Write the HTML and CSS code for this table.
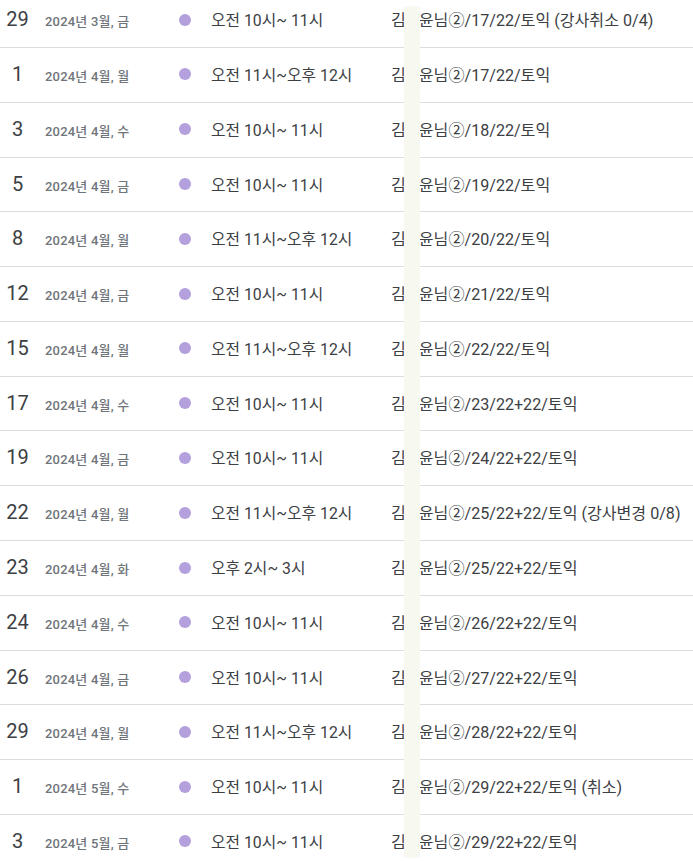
FILE: index.html
```html
<!DOCTYPE html>
<html lang="ko">
<head>
<meta charset="utf-8">
<link rel="stylesheet" href="styles.css">
</head>
<body>
<div class="agenda">
  <div class="row"><div class="day">29</div><div class="date">2024년 3월, 금</div><div class="dotcell"><span class="dot"></span></div><div class="time">오전 10시~ 11시</div><div class="title">김<span class="gap"></span>윤님②/17/22/토익 (강사취소 0/4)</div></div>
  <div class="row"><div class="day">1</div><div class="date">2024년 4월, 월</div><div class="dotcell"><span class="dot"></span></div><div class="time">오전 11시~오후 12시</div><div class="title">김<span class="gap"></span>윤님②/17/22/토익</div></div>
  <div class="row"><div class="day">3</div><div class="date">2024년 4월, 수</div><div class="dotcell"><span class="dot"></span></div><div class="time">오전 10시~ 11시</div><div class="title">김<span class="gap"></span>윤님②/18/22/토익</div></div>
  <div class="row"><div class="day">5</div><div class="date">2024년 4월, 금</div><div class="dotcell"><span class="dot"></span></div><div class="time">오전 10시~ 11시</div><div class="title">김<span class="gap"></span>윤님②/19/22/토익</div></div>
  <div class="row"><div class="day">8</div><div class="date">2024년 4월, 월</div><div class="dotcell"><span class="dot"></span></div><div class="time">오전 11시~오후 12시</div><div class="title">김<span class="gap"></span>윤님②/20/22/토익</div></div>
  <div class="row"><div class="day">12</div><div class="date">2024년 4월, 금</div><div class="dotcell"><span class="dot"></span></div><div class="time">오전 10시~ 11시</div><div class="title">김<span class="gap"></span>윤님②/21/22/토익</div></div>
  <div class="row"><div class="day">15</div><div class="date">2024년 4월, 월</div><div class="dotcell"><span class="dot"></span></div><div class="time">오전 11시~오후 12시</div><div class="title">김<span class="gap"></span>윤님②/22/22/토익</div></div>
  <div class="row"><div class="day">17</div><div class="date">2024년 4월, 수</div><div class="dotcell"><span class="dot"></span></div><div class="time">오전 10시~ 11시</div><div class="title">김<span class="gap"></span>윤님②/23/22+22/토익</div></div>
  <div class="row"><div class="day">19</div><div class="date">2024년 4월, 금</div><div class="dotcell"><span class="dot"></span></div><div class="time">오전 10시~ 11시</div><div class="title">김<span class="gap"></span>윤님②/24/22+22/토익</div></div>
  <div class="row"><div class="day">22</div><div class="date">2024년 4월, 월</div><div class="dotcell"><span class="dot"></span></div><div class="time">오전 11시~오후 12시</div><div class="title">김<span class="gap"></span>윤님②/25/22+22/토익 (강사변경 0/8)</div></div>
  <div class="row"><div class="day">23</div><div class="date">2024년 4월, 화</div><div class="dotcell"><span class="dot"></span></div><div class="time">오후 2시~ 3시</div><div class="title">김<span class="gap"></span>윤님②/25/22+22/토익</div></div>
  <div class="row"><div class="day">24</div><div class="date">2024년 4월, 수</div><div class="dotcell"><span class="dot"></span></div><div class="time">오전 10시~ 11시</div><div class="title">김<span class="gap"></span>윤님②/26/22+22/토익</div></div>
  <div class="row"><div class="day">26</div><div class="date">2024년 4월, 금</div><div class="dotcell"><span class="dot"></span></div><div class="time">오전 10시~ 11시</div><div class="title">김<span class="gap"></span>윤님②/27/22+22/토익</div></div>
  <div class="row"><div class="day">29</div><div class="date">2024년 4월, 월</div><div class="dotcell"><span class="dot"></span></div><div class="time">오전 11시~오후 12시</div><div class="title">김<span class="gap"></span>윤님②/28/22+22/토익</div></div>
  <div class="row"><div class="day">1</div><div class="date">2024년 5월, 수</div><div class="dotcell"><span class="dot"></span></div><div class="time">오전 10시~ 11시</div><div class="title">김<span class="gap"></span>윤님②/29/22+22/토익 (취소)</div></div>
  <div class="row"><div class="day">3</div><div class="date">2024년 5월, 금</div><div class="dotcell"><span class="dot"></span></div><div class="time">오전 10시~ 11시</div><div class="title">김<span class="gap"></span>윤님②/29/22+22/토익</div></div>
</div>
<div class="redact"></div>
</body>
</html>
```
FILE: styles.css
```css
html, body {
  margin: 0;
  padding: 0;
  background: #ffffff;
  overflow: hidden;
}
body {
  font-family: Roboto, "Noto Sans CJK KR", sans-serif;
  color: #3c4043;
}
.agenda {
  margin-top: -6.8px;
}
.row {
  display: grid;
  grid-template-columns: 35px 144px 32px 180px 1fr;
  align-items: baseline;
  height: 53.79px;
  box-sizing: content-box;
  border-bottom: 1px solid #dadce0;
  line-height: 1;
}
.row > div {
  padding-top: 16px;
}
.day {
  text-align: center;
  font-size: 20px;
  color: #3c4043;
}
.date {
  padding-left: 10px;
  font-size: 13px;
  font-weight: 500;
  letter-spacing: 0.2px;
  color: #70757a;
}
.dotcell {
  align-self: start;
  padding-top: 0 !important;
  height: 53px;
  display: flex;
  align-items: center;
}
.dot {
  display: block;
  width: 12px;
  height: 12px;
  border-radius: 50%;
  background: #b3a0dc;
}
.time, .title {
  color: #3c4043;
  white-space: nowrap;
}
.time {
  font-size: 15.8px;
}
.title {
  font-size: 16.1px;
}
.gap {
  display: inline-block;
  width: 13px;
}
.redact {
  position: absolute;
  left: 404px;
  top: 6px;
  width: 16px;
  height: 852px;
  background: #f7f8f0;
  border-radius: 3px;
}
```
